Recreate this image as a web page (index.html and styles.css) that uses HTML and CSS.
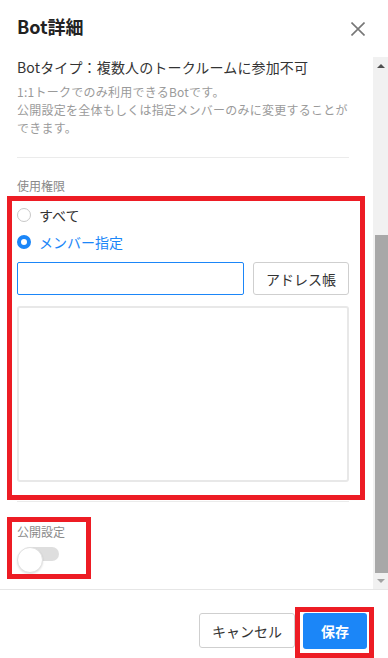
FILE: index.html
```html
<!DOCTYPE html>
<html lang="ja">
<head>
<meta charset="utf-8">
<title>Bot詳細</title>
<link rel="stylesheet" href="styles.css">
</head>
<body>
<div class="dialog">
  <header class="dlg-head">
    <h1 class="dlg-title">Bot詳細</h1>
    <button class="close" aria-label="閉じる">
      <svg width="14" height="14" viewBox="0 0 14 14"><path d="M0.5 0.5 L13.5 13.5 M13.5 0.5 L0.5 13.5" stroke="#777" stroke-width="1.6" fill="none"/></svg>
    </button>
  </header>
  <div class="dlg-body">
    <div class="content">
      <p class="type-title">Botタイプ：複数人のトークルームに参加不可</p>
      <p class="desc">1:1トークでのみ利用できるBotです。<br>公開設定を全体もしくは指定メンバーのみに変更することができます。</p>
      <div class="sep"></div>
      <p class="label">使用権限</p>
      <div class="radio-row first"><span class="radio"></span><span class="radio-text">すべて</span></div>
      <div class="radio-row second"><span class="radio checked"></span><span class="radio-text on">メンバー指定</span></div>
      <div class="input-row">
        <div class="text-input"></div>
        <button class="btn addr">アドレス帳</button>
      </div>
      <div class="list-box"></div>
      <div class="sep sep2"></div>
      <p class="label label2">公開設定</p>
      <div class="toggle"><span class="toggle-track"></span><span class="toggle-knob"></span></div>
    </div>
    <div class="scrollbar">
      <div class="sb-btn sb-up"><span class="tri-up"></span></div>
      <div class="sb-thumb"></div>
      <div class="sb-btn sb-down"><span class="tri-down"></span></div>
    </div>
  </div>
  <footer class="dlg-foot">
    <button class="btn cancel">キャンセル</button>
    <button class="btn save">保存</button>
  </footer>
  <div class="mark mark-perm"></div>
  <div class="mark mark-public"></div>
  <div class="mark mark-save"></div>
</div>
</body>
</html>
```
FILE: styles.css
```css
* { box-sizing: border-box; }
html, body { margin: 0; padding: 0; background: #fff; }
body {
  font-family: "Noto Sans CJK JP", "Noto Sans", "Liberation Sans", sans-serif;
  color: #333;
}
p { margin: 0; }
button { font-family: inherit; }

.dialog {
  position: relative;
  width: 388px;
  height: 658px;
  overflow: hidden;
  background: #fff;
}

.dlg-head {
  height: 57px;
  display: flex;
  align-items: flex-start;
  padding-left: 17px;
}
.dlg-title {
  margin: 13px 0 0 0;
  font-size: 18px;
  line-height: 26px;
  font-weight: 700;
  color: #222;
}
.close {
  margin: 22px 23px 0 auto;
  padding: 0;
  width: 14px;
  height: 14px;
  border: 0;
  background: none;
  display: flex;
}

.dlg-body {
  height: 533px;
  display: flex;
  border-bottom: 1px solid #e6e6e6;
}
.content {
  flex: 1;
  padding: 0 24px 0 17px;
}
.type-title {
  font-size: 14px;
  line-height: 20px;
  color: #333;
  letter-spacing: 0.15px;
}
.desc {
  margin-top: 6px;
  font-size: 12px;
  line-height: 18px;
  color: #9a9a9a;
  letter-spacing: 0.25px;
}
.sep {
  margin-top: 20px;
  border-top: 1px solid #ebebeb;
}
.label {
  margin-top: 19px;
  font-size: 12px;
  line-height: 18px;
  color: #8a8a8a;
}
.radio-row {
  display: flex;
  align-items: center;
  height: 20px;
}
.radio-row.first { margin-top: 10px; }
.radio-row.second { margin-top: 7px; }
.radio {
  width: 14px;
  height: 14px;
  border-radius: 50%;
  border: 1px solid #c8c8c8;
  background: #fff;
  flex: none;
}
.radio.checked {
  border: 4px solid #1b86f8;
}
.radio-text {
  margin-left: 8px;
  font-size: 14px;
  line-height: 20px;
  color: #333;
}
.radio-text.on { color: #1b86f8; }

.input-row {
  margin-top: 10px;
  display: flex;
  gap: 9px;
  height: 33px;
}
.text-input {
  flex: 1;
  border: 1px solid #1b86f8;
  border-radius: 2px;
}
.btn {
  border: 1px solid #cfcfcf;
  border-radius: 3px;
  background: #fff;
  font-size: 14px;
  color: #333;
  padding: 0;
}
.addr {
  width: 96px;
}
.list-box {
  margin-top: 11px;
  height: 176px;
  border: 2px solid #e8e8e8;
  border-radius: 3px;
}
.sep2 { margin-top: 19px; }
.label2 { margin-top: 21px; }

.toggle {
  position: relative;
  margin-top: 5px;
  width: 42px;
  height: 26px;
}
.toggle-track {
  display: block;
  margin: 6px 0 0 6px;
  width: 36px;
  height: 14px;
  border-radius: 7px;
  background: #dedede;
}
.toggle-knob {
  position: absolute;
  left: 0;
  top: 0;
  width: 26px;
  height: 26px;
  border-radius: 50%;
  background: #fff;
  border: 1px solid #e0e0e0;
  box-shadow: 0 1px 2px rgba(0,0,0,0.12);
}

.scrollbar {
  width: 15px;
  flex: none;
  background: #f1f1f1;
  display: flex;
  flex-direction: column;
}
.sb-btn {
  display: flex;
  align-items: center;
  justify-content: center;
}
.sb-up { height: 17px; }
.sb-down { height: 16px; }
.tri-up {
  width: 0; height: 0;
  border-left: 4px solid transparent;
  border-right: 4px solid transparent;
  border-bottom: 4px solid #505050;
}
.tri-down {
  width: 0; height: 0;
  border-left: 4px solid transparent;
  border-right: 4px solid transparent;
  border-top: 4px solid #a3a3a3;
}
.sb-thumb {
  margin-top: auto;
  margin-left: 2px;
  width: 13px;
  height: 338px;
  background: #a8a8a8;
}

.dlg-foot {
  height: 68px;
  display: flex;
  justify-content: flex-end;
  align-items: flex-start;
  gap: 8px;
  padding: 23px 21px 0 0;
}
.cancel {
  width: 96px;
  height: 35px;
}
.save {
  width: 64px;
  height: 36px;
  border: 0;
  background: #1b86f8;
  color: #fff;
  font-weight: 700;
}

.mark {
  position: absolute;
  border: 5px solid #ed1c24;
}
.mark-perm { left: 7px; top: 196px; width: 358px; height: 304px; }
.mark-public { left: 7px; top: 517px; width: 84px; height: 62px; }
.mark-save { left: 295px; top: 607px; width: 79px; height: 51px; }
```
